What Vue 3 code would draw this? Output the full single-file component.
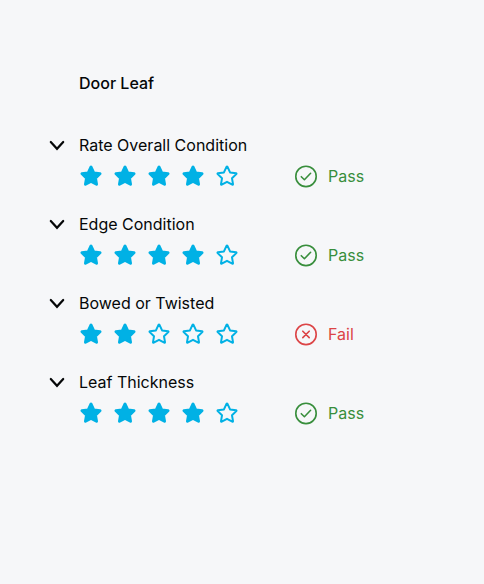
<script setup>
import { reactive } from 'vue'

const items = reactive([
  { name: 'Rate Overall Condition', rating: 4, pass: true },
  { name: 'Edge Condition', rating: 4, pass: true },
  { name: 'Bowed or Twisted', rating: 2, pass: false },
  { name: 'Leaf Thickness', rating: 4, pass: true },
])
</script>

<template>
  <main class="panel">
    <h1 class="title">Door Leaf</h1>
    <ul class="list">
      <li v-for="item in items" :key="item.name" class="item">
        <button class="toggle" type="button" :aria-label="item.name">
          <svg width="16" height="24" viewBox="0 0 16 24" aria-hidden="true">
            <path d="M1.8 9L8 15.8L14.2 9" fill="none" stroke="currentColor" stroke-width="2.2" stroke-linecap="round" />
          </svg>
        </button>
        <h2 class="name">{{ item.name }}</h2>
        <div class="stars" role="group" :aria-label="item.name">
          <button
            v-for="n in 5"
            :key="n"
            class="star"
            :class="{ filled: n <= item.rating }"
            type="button"
            :aria-label="String(n)"
            :aria-pressed="n <= item.rating"
            @click="item.rating = n"
          >
            <svg width="24" height="24" viewBox="0 0 24 24" aria-hidden="true">
              <path d="M11.5 2.9Q12 2.2 12.5 2.9L15.06 8.4L21.1 9.2Q21.8 9.5 21.3 10.1L17 14.3L18 20.2Q18 21 17.3 20.7L12 17.8L6.7 20.7Q6 21 6 20.2L7 14.3L2.7 10.1Q2.2 9.5 2.9 9.2L8.94 8.4Z" />
            </svg>
          </button>
        </div>
        <div class="result" :class="item.pass ? 'pass' : 'fail'">
          <svg width="24" height="24" viewBox="0 0 24 24" aria-hidden="true">
            <circle cx="12" cy="12.4" r="10.2" />
            <path v-if="item.pass" d="M7.3 12.7l3.1 3 6.2-6.4" />
            <path v-else d="M8.8 9.2l6.4 6.4M15.2 9.2l-6.4 6.4" />
          </svg>
          <span>{{ item.pass ? 'Pass' : 'Fail' }}</span>
        </div>
      </li>
    </ul>
  </main>
</template>

<style>
body {
  margin: 0;
  background: #f6f7f9;
}
</style>

<style scoped>
.panel {
  padding: 71px 49px;
  color: #050708;
  font-family: Inter, sans-serif;
  font-size: 16px;
  line-height: 24px;
}

.title {
  margin: 0 0 38px 30px;
  font-size: 16px;
  font-weight: 500;
}

.list {
  display: grid;
  gap: 24px;
  margin: 0;
  padding: 0;
  list-style: none;
}

.item {
  display: grid;
  grid-template-columns: 30px 215px 1fr;
  row-gap: 7px;
}

.toggle,
.star {
  padding: 0;
  border: 0;
  background: none;
  color: inherit;
  cursor: pointer;
}

.toggle {
  justify-self: start;
}

svg {
  display: block;
}

.name {
  grid-column: 2 / 4;
  margin: 0;
  font-size: 16px;
  font-weight: 400;
}

.stars {
  grid-column: 2;
  display: flex;
  gap: 10px;
}

.star path {
  fill: none;
  stroke: #00b1e5;
  stroke-width: 2;
  stroke-linejoin: round;
}

.star.filled path {
  fill: #00b1e5;
}

.result {
  display: flex;
  gap: 10px;
}

.result svg {
  fill: none;
  stroke: currentColor;
  stroke-width: 1.6;
  stroke-linecap: round;
  stroke-linejoin: round;
}

.pass {
  color: #388e3c;
}

.fail {
  color: #dc4446;
}
</style>
